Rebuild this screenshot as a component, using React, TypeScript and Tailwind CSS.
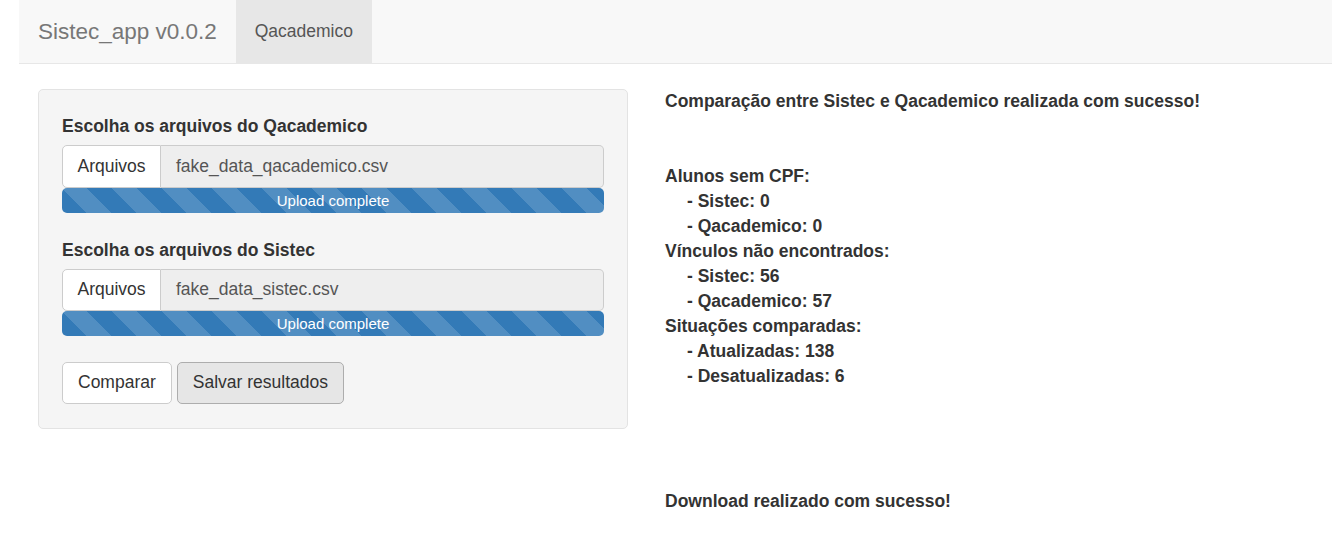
import React from "react";

const stripe =
  "bg-[#337ab7] bg-[linear-gradient(45deg,rgba(255,255,255,.15)_25%,transparent_25%,transparent_50%,rgba(255,255,255,.15)_50%,rgba(255,255,255,.15)_75%,transparent_75%,transparent)] bg-[length:50px_50px]";

function FileInput({ label, file }: { label: string; file: string }) {
  return (
    <div>
      <div className="font-bold leading-[25px] mb-[6px]">{label}</div>
      <div className="flex h-[42.5px]">
        <div className="w-[99px] shrink-0 bg-white border border-[#ccc] rounded-l-[5px] flex items-center justify-center text-[#333]">
          Arquivos
        </div>
        <div className="flex-1 bg-[#eee] border border-l-0 border-[#ccc] rounded-r-[5px] flex items-center pl-[15px] text-[#555]">
          {file}
        </div>
      </div>
      <div
        className={`h-[25px] rounded-[5px] ${stripe} text-white text-[15px] leading-[25px] text-center`}
      >
        Upload complete
      </div>
    </div>
  );
}

export default function App() {
  const lines: { t: string; indent?: boolean }[] = [
    { t: "Alunos sem CPF:" },
    { t: "- Sistec: 0", indent: true },
    { t: "- Qacademico: 0", indent: true },
    { t: "Vínculos não encontrados:" },
    { t: "- Sistec: 56", indent: true },
    { t: "- Qacademico: 57", indent: true },
    { t: "Situações comparadas:" },
    { t: "- Atualizadas: 138", indent: true },
    { t: "- Desatualizadas: 6", indent: true },
  ];
  return (
    <div
      className="pl-[19px] text-[17.5px] leading-[25px] text-[#333] bg-white min-h-[539px]"
      style={{ fontFamily: '"Liberation Sans", Arial, sans-serif' }}
    >
      <div className="h-[63.5px] bg-[#f8f8f8] border-b border-[#e7e7e7] flex">
        <div className="px-[19px] flex items-center text-[22.5px] text-[#777]">
          Sistec_app v0.0.2
        </div>
        <div className="px-[18.75px] flex items-center bg-[#e7e7e7] text-[#555]">
          Qacademico
        </div>
      </div>
      <div className="flex mt-[25.5px]">
        <div className="pl-[19px] w-[609px] shrink-0">
          <div className="bg-[#f5f5f5] border border-[#e3e3e3] rounded-[5px] px-[23px] pt-[24px] pb-[24px]">
            <FileInput label="Escolha os arquivos do Qacademico" file="fake_data_qacademico.csv" />
            <div className="h-[25px]" />
            <FileInput label="Escolha os arquivos do Sistec" file="fake_data_sistec.csv" />
            <div className="flex gap-[5px] mt-[25.5px]">
              <div className="h-[42.5px] px-[15px] flex items-center bg-white border border-[#ccc] rounded-[5px]">
                Comparar
              </div>
              <div className="h-[42.5px] px-[15px] flex items-center bg-[#e6e6e6] border border-[#adadad] rounded-[5px]">
                Salvar resultados
              </div>
            </div>
          </div>
        </div>
        <div className="pl-[37px] font-bold">
          <div>Comparação entre Sistec e Qacademico realizada com sucesso!</div>
          <div className="h-[50px]" />
          {lines.map((l, i) => (
            <div key={i} className={l.indent ? "pl-[22px]" : ""}>
              {l.t}
            </div>
          ))}
          <div className="h-[100px]" />
          <div>Download realizado com sucesso!</div>
        </div>
      </div>
    </div>
  );
}
